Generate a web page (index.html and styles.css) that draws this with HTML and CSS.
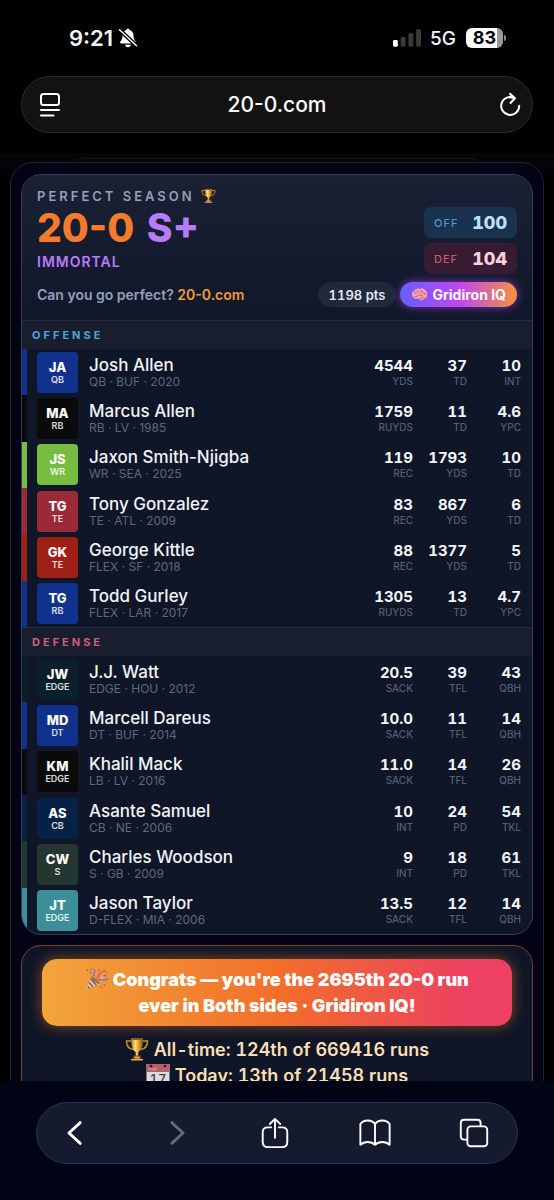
FILE: index.html
```
<!DOCTYPE html>
<html lang="en">
<head>
  <meta charset="utf-8">
  <meta name="viewport" content="width=device-width, initial-scale=1">
  <title>20-0.com</title>
  <link rel="stylesheet" href="styles.css">
</head>
<body>
<!-- Shared icons -->
<svg class="defs" aria-hidden="true">
  <defs>
    <linearGradient id="gold" x1="0" x2="1" y1="0" y2="0">
      <stop offset="0" stop-color="#a8680f"/>
      <stop offset=".35" stop-color="#ffe08a"/>
      <stop offset=".6" stop-color="#e5a82c"/>
      <stop offset="1" stop-color="#8f560c"/>
    </linearGradient>
    <symbol id="trophy" viewBox="0 0 24 24">
      <path d="M7 4H1.500c0 5 2.500 8 7 8.500M17 4h5.500c0 5-2.500 8-7 8.500" fill="none" stroke="#c98f2c" stroke-width="1.500"/>
      <path d="M6 1.500h12c0 7-1.500 12-4.700 13.500v4h-2.600v-4C7.500 13.500 6 8.500 6 1.500z" fill="url(#gold)"/>
      <ellipse cx="12" cy="2" rx="6" ry="1" fill="#8a5a15"/>
      <path d="M8.500 18.500h7l1.500 4.500H7z" fill="#8a3f1c"/>
      <path d="M9.500 19.500h5v2h-5zM6 22h12v1.500H6z" fill="#e2ad45"/>
    </symbol>
  </defs>
</svg>

<header class="status">
  <div class="status-left">
    <time>9:21</time>
    <svg class="bell" viewBox="0 0 20 20">
      <path d="M10 .8c.9 0 1.500.5 1.600 1.300 2.600.7 3.900 2.900 3.900 5.500 0 3.500 1 4.600 2.100 6 .7.900.3 1.800-.8 1.800H3.200c-1.100 0-1.500-.9-.8-1.800 1.100-1.400 2.100-2.500 2.100-6 0-2.600 1.300-4.800 3.900-5.500C8.500 1.300 9.100.8 10 .8zM7 16.800h6c-.3 1.600-1.500 2.400-3 2.400s-2.700-.8-3-2.400z" fill="#fff"/>
      <path d="M1.500 1.800l17 16" stroke="#000" stroke-width="4"/>
      <path d="M1.500 1.800l17 16" stroke="#fff" stroke-width="1.500" stroke-linecap="round"/>
    </svg>
  </div>
  <div class="status-right">
    <svg class="signal" viewBox="0 0 29 18">
      <rect x="0" y="11" width="5" height="7" rx="1.500" fill="#fff"/>
      <rect x="8" y="8" width="5" height="10" rx="1.500" fill="#3a3a3a"/>
      <rect x="16" y="4" width="5" height="14" rx="1.500" fill="#3a3a3a"/>
      <rect x="24" y="0" width="5" height="18" rx="1.500" fill="#3a3a3a"/>
    </svg>
    <span class="network">5G</span>
    <span class="battery">83</span>
  </div>
</header>

<div class="address">
  <button class="icon-btn" aria-label="Page menu">
    <svg viewBox="0 0 24 26" width="24" height="26">
      <rect x="3" y="2" width="18" height="11" rx="2.500"/>
      <path d="M3 18h18M3 23.500h12.500"/>
    </svg>
  </button>
  <input type="text" value="20-0.com" aria-label="Address">
  <button class="icon-btn" aria-label="Reload">
    <svg viewBox="0 0 24 26" width="24" height="26">
      <path d="M17 6.300 A9 9 0 1 0 21.200 13.800M12 1.800l5 4.500-4.500 4.700M16.500 6.200C15 5.500 13.500 5.300 12 5.500"/>
    </svg>
  </button>
</div>

<main class="page">
  <div class="behind"></div>
  <div class="modal">
    <section class="card">
      <div class="summary">
        <div class="summary-top">
          <div>
            <p class="kicker">PERFECT SEASON <svg class="cup-small"><use href="#trophy"/></svg></p>
            <h1>20-0 <span>S+</span></h1>
            <p class="tier">IMMORTAL</p>
          </div>
          <div class="ratings">
            <div class="rating off"><span>OFF</span><b>100</b></div>
            <div class="rating def"><span>DEF</span><b>104</b></div>
          </div>
        </div>
        <div class="summary-bottom">
          <p class="tagline">Can you go perfect? <a href="#">20-0.com</a></p>
          <span class="points">1198 pts</span>
          <span class="mode">
            <svg class="brain" viewBox="0 0 18 16">
              <path d="M2 10C0 8 1 5 3 4.500 4 2 7 1 9 2c2-1.200 5-.5 6 1.500 2 .7 3 3 2 5 .3 2-1 3.500-3 3.500-.5 1.500-2 2.500-4 2l-2-2c-2 1-5 .5-6-2z" fill="#f3a3ae"/>
              <path d="M3 7c1-1.500 2.500-1 3 0M6 4.500c1.500-.5 2.500.5 2.500 1.500M10 4c1.500 0 2 1 1.500 2.500M13 6c1.500 0 2 1 1.800 2M4 10c1.500.5 3 0 3.500-1.500M9 9c1.500-1 3 0 3.500 1M10 12c1 .3 2.500 0 3-1" fill="none" stroke="#b5566b"/>
            </svg>
            Gridiron IQ
          </span>
        </div>
      </div>

      <h2 class="offense">OFFENSE</h2>
      <table>
        <tr class="buf"><td class="player"><div><span class="badge">JA<small>QB</small></span><p>Josh Allen<small>QB · BUF · 2020</small></p></div></td><td>4544<small>YDS</small></td><td>37<small>TD</small></td><td>10<small>INT</small></td></tr>
        <tr class="lv"><td class="player"><div><span class="badge">MA<small>RB</small></span><p>Marcus Allen<small>RB · LV · 1985</small></p></div></td><td>1759<small>RUYDS</small></td><td>11<small>TD</small></td><td>4.6<small>YPC</small></td></tr>
        <tr class="sea"><td class="player"><div><span class="badge">JS<small>WR</small></span><p>Jaxon Smith-Njigba<small>WR · SEA · 2025</small></p></div></td><td>119<small>REC</small></td><td>1793<small>YDS</small></td><td>10<small>TD</small></td></tr>
        <tr class="atl"><td class="player"><div><span class="badge">TG<small>TE</small></span><p>Tony Gonzalez<small>TE · ATL · 2009</small></p></div></td><td>83<small>REC</small></td><td>867<small>YDS</small></td><td>6<small>TD</small></td></tr>
        <tr class="sf"><td class="player"><div><span class="badge">GK<small>TE</small></span><p>George Kittle<small>FLEX · SF · 2018</small></p></div></td><td>88<small>REC</small></td><td>1377<small>YDS</small></td><td>5<small>TD</small></td></tr>
        <tr class="buf"><td class="player"><div><span class="badge">TG<small>RB</small></span><p>Todd Gurley<small>FLEX · LAR · 2017</small></p></div></td><td>1305<small>RUYDS</small></td><td>13<small>TD</small></td><td>4.7<small>YPC</small></td></tr>
      </table>

      <h2 class="defense">DEFENSE</h2>
      <table>
        <tr class="hou"><td class="player"><div><span class="badge">JW<small>EDGE</small></span><p>J.J. Watt<small>EDGE · HOU · 2012</small></p></div></td><td>20.5<small>SACK</small></td><td>39<small>TFL</small></td><td>43<small>QBH</small></td></tr>
        <tr class="buf"><td class="player"><div><span class="badge">MD<small>DT</small></span><p>Marcell Dareus<small>DT · BUF · 2014</small></p></div></td><td>10.0<small>SACK</small></td><td>11<small>TFL</small></td><td>14<small>QBH</small></td></tr>
        <tr class="lv"><td class="player"><div><span class="badge">KM<small>EDGE</small></span><p>Khalil Mack<small>LB · LV · 2016</small></p></div></td><td>11.0<small>SACK</small></td><td>14<small>TFL</small></td><td>26<small>QBH</small></td></tr>
        <tr class="ne"><td class="player"><div><span class="badge">AS<small>CB</small></span><p>Asante Samuel<small>CB · NE · 2006</small></p></div></td><td>10<small>INT</small></td><td>24<small>PD</small></td><td>54<small>TKL</small></td></tr>
        <tr class="gb"><td class="player"><div><span class="badge">CW<small>S</small></span><p>Charles Woodson<small>S · GB · 2009</small></p></div></td><td>9<small>INT</small></td><td>18<small>PD</small></td><td>61<small>TKL</small></td></tr>
        <tr class="mia"><td class="player"><div><span class="badge">JT<small>EDGE</small></span><p>Jason Taylor<small>D-FLEX · MIA · 2006</small></p></div></td><td>13.5<small>SACK</small></td><td>12<small>TFL</small></td><td>14<small>QBH</small></td></tr>
      </table>
    </section>

    <section class="congrats">
      <p class="banner">
        <svg class="emoji" viewBox="0 0 24 24">
          <path d="M1.500 22.500L6 9.500c3 1 7 5 8.500 7.500z" fill="#f2cc6b"/>
          <path d="M4 15.500l4 4.500M5.500 11.500l6 7M2.800 19.500l2 2" stroke="#6c58b8" stroke-width="1.600"/>
          <path d="M6 9.500c2-.8 9.500 5.500 8.500 7.500-2.500.5-9-5-8.500-7.500z" fill="#a5713a"/>
          <path d="M9 9c-1-2.500 1.500-3.500.5-6.500M13.500 13c2.500-1.500 5 1 9-1" fill="none" stroke="#6f78dd" stroke-width="1.500" stroke-linecap="round"/>
          <path d="M12 11c2.500-1.500 1-4 3.500-5s2-2.500 4.500-2" fill="none" stroke="#e3546a" stroke-width="1.500" stroke-linecap="round"/>
          <path d="M1.500 2l2 1.200-1.800 1.300zM4.500 5.500l1.500-1 .5 2zM18.500 8.500l2.500-.8v2zM18.500 17l2 .5-1 1.800z" fill="#5d62c9"/>
          <path d="M5.500 1.500l2 .5-1.500 1.500zM12.500 3l2-1v2.500zM21 5l2 .8-2 1zM15.500 19.500l1.800.8-1.500 1.200z" fill="#e0455e"/>
          <circle cx="17" cy="11" r=".9" fill="#f7e27a"/>
        </svg>
        Congrats — you're the 2695th 20-0 run ever in Both sides · Gridiron IQ!
      </p>
      <p class="rank"><svg class="emoji"><use href="#trophy"/></svg> All-time: 124th of 669416 runs</p>
      <p class="rank">
        <svg class="emoji" viewBox="0 0 24 24">
          <rect x=".5" y="1" width="23" height="23" fill="#dcdcdf"/>
          <path d="M.5 1h23v8H.5z" fill="#b5606b"/>
          <circle cx="5" cy="3" r="1.300" fill="#30191d"/>
          <circle cx="19" cy="3" r="1.300" fill="#30191d"/>
          <path d="M3 7l1-2 1 2M7 5.500V7h1.500V5.500M10 7V4.500" stroke="#e6b9bd" stroke-width=".7" fill="none"/>
          <text x="12" y="21" text-anchor="middle">17</text>
        </svg>
        Today: 13th of 21458 runs
      </p>
    </section>
  </div>
</main>

<footer class="browser-bar">
  <nav class="toolbar">
    <button aria-label="Back"><svg viewBox="0 0 36 36"><path d="M22.500 7L10.500 18l12 11" stroke-width="3"/></svg></button>
    <button aria-label="Forward" disabled><svg viewBox="0 0 36 36"><path d="M13.500 7l12 11-12 11" stroke-width="3"/></svg></button>
    <button aria-label="Share"><svg viewBox="0 0 36 36"><path d="M14 12h-3.500Q5 12 5 17v10.500Q5 33 10.500 33h15q5.500 0 5.500-5.500V17q0-5-5.500-5H22M18 23V3M12.500 8.500L18 3l5.500 5.500"/></svg></button>
    <button aria-label="Bookmarks"><svg viewBox="0 0 36 36"><path d="M18 8.500C14.500 3.500 6 3.500 2.500 8.500v22c4-4 11.500-4 15.500 0 4-4 11.500-4 15.500 0v-22C30 3.500 21.500 3.500 18 8.500zM18 8.500v22"/></svg></button>
    <button aria-label="Tabs"><svg viewBox="0 0 36 36"><path d="M10.500 25H7.500Q4 25 4 21.500v-14Q4 4 7.500 4h14Q25 4 25 7.500v3"/><rect x="11" y="11" width="21" height="21" rx="3.500"/></svg></button>
  </nav>
</footer>
</body>
</html>
```

FILE: styles.css
```
* {
  box-sizing: border-box;
}
body {
  margin: 0;
  height: 100vh;
  display: flex;
  flex-direction: column;
  overflow: hidden;
  background: #000;
  color: #f1f5f9;
  font-family: Inter, "Liberation Sans", sans-serif;
}
h1, h2, p {
  margin: 0;
}
button {
  padding: 0;
  border: 0;
  background: none;
}
button svg {
  display: block;
  fill: none;
  stroke: #fff;
  stroke-width: 2;
  stroke-linecap: round;
  stroke-linejoin: round;
}
.defs {
  position: absolute;
  width: 0;
  height: 0;
}

/* Phone status bar */
.status {
  flex: none;
  height: 76px;
  padding: 0 48px 0 69px;
  display: flex;
  align-items: center;
  justify-content: space-between;
}
.status-left, .status-right {
  display: flex;
  align-items: center;
}
.status-left {
  gap: 5px;
  font-size: 22px;
  font-weight: 600;
}
.bell {
  width: 20px;
  height: 20px;
}
.signal {
  width: 28px;
  height: 18px;
}
.network {
  margin: 0 10px 0 9px;
  font-size: 19px;
  font-weight: 500;
}
.battery {
  position: relative;
  width: 37px;
  height: 20px;
  margin-right: 3px;
  border-radius: 6px;
  background: linear-gradient(90deg, #fff 83%, #999 83%);
  color: #000;
  font-size: 18px;
  font-weight: 700;
  line-height: 20px;
  text-align: center;
}
.battery::after {
  content: "";
  position: absolute;
  left: 38px;
  top: 7px;
  width: 2px;
  height: 6px;
  border-radius: 0 2px 2px 0;
  background: #888;
}

/* Address bar */
.address {
  flex: none;
  height: 57px;
  margin: 0 21px 20px;
  padding: 0 10px 0 16px;
  display: flex;
  align-items: center;
  border: 1px solid #2b2b2b;
  border-radius: 29px;
  background: #121212;
}
.address input {
  flex: 1;
  min-width: 0;
  padding: 0 6px 0 0;
  border: 0;
  background: none;
  color: #fff;
  font: 500 21px Inter, "Liberation Sans", sans-serif;
  text-align: center;
}

/* Page under the popup */
.page {
  position: relative;
  flex: 1;
  min-height: 0;
  overflow: hidden;
  padding: 9px 10px 0;
  background: linear-gradient(#04060a, #000 30px);
}
.behind {
  position: absolute;
  top: 5px;
  left: 72px;
  right: 72px;
  height: 40px;
  border: 1px solid #15180a;
  border-radius: 12px;
}
.modal {
  position: relative;
  padding: 11px 10px;
  border: 1px solid #1f2333;
  border-radius: 22px;
  background: #020416;
}
.card {
  overflow: hidden;
  border: 1px solid #353d50;
  border-radius: 20px;
  background: #0f1627;
}

/* Card header */
.summary {
  padding: 12px 15px 13px;
  background: linear-gradient(#1a2135, #11172a);
}
.summary-top {
  display: flex;
  justify-content: space-between;
}
.kicker {
  display: flex;
  align-items: center;
  gap: 6px;
  height: 17px;
  color: #94a0b4;
  font-size: 13px;
  font-weight: 600;
  letter-spacing: 3px;
}
.cup-small {
  width: 15px;
  height: 15px;
}
h1 {
  color: #f47a2c;
  font-size: 39px;
  font-weight: 800;
  line-height: 48px;
}
h1 span {
  margin-left: 4px;
  color: #b77cfa;
}
.tier {
  color: #b77cfa;
  font-size: 14px;
  font-weight: 600;
  letter-spacing: 1px;
  line-height: 20px;
}
.ratings {
  display: flex;
  flex-direction: column;
  gap: 5px;
  padding-top: 20px;
}
.rating {
  display: flex;
  align-items: center;
  justify-content: space-between;
  width: 93px;
  height: 31px;
  padding: 0 10px;
  border-radius: 7px;
  font-size: 18px;
  font-variant-numeric: tabular-nums;
}
.rating span {
  font-size: 11px;
  font-weight: 500;
  letter-spacing: 1px;
}
.rating b {
  font-weight: 800;
}
.off {
  background: #19324d;
  color: #bfe0fb;
}
.off span {
  color: #4c9ad0;
}
.def {
  background: #351c33;
  color: #fbcfdb;
}
.def span {
  color: #cc5578;
}
.summary-bottom {
  display: flex;
  align-items: center;
  gap: 4px;
  padding-top: 8px;
}
.tagline {
  flex: 1;
  color: #94a0b4;
  font-size: 14px;
  font-weight: 600;
}
.tagline a {
  color: #f49a38;
  text-decoration: none;
}
.points, .mode {
  display: flex;
  align-items: center;
  height: 25px;
  border-radius: 13px;
}
.points {
  padding: 0 11px;
  background: #1f293b;
  color: #e2e8f0;
  font-size: 13px;
  font-variant-numeric: tabular-nums;
  font-weight: 600;
}
.mode {
  gap: 4px;
  padding: 0 11px;
  background: linear-gradient(90deg, #6660fa, #bf45f2 50%, #f5923c);
  box-shadow: 0 0 9px #8136b8;
  color: #fff;
  font-size: 14px;
  font-weight: 700;
}
.brain {
  width: 17px;
  height: 15px;
}

/* Player lists */
h2 {
  height: 29px;
  padding-left: 10px;
  border-top: 1px solid #272d3d;
  background: #181e2e;
  font-size: 11px;
  font-weight: 700;
  letter-spacing: 3px;
  line-height: 28px;
}
.offense {
  color: #4fa3dc;
}
.defense {
  color: #cd5c7d;
}
table {
  width: 100%;
  height: 278px;
  border-spacing: 0;
  table-layout: fixed;
}
tr {
  height: 46px;
}
td {
  width: 54px;
  padding: 0;
  font-size: 15px;
  font-variant-numeric: tabular-nums;
  font-weight: 700;
  line-height: 17px;
  text-align: right;
}
td:last-child {
  width: 65px;
  padding-right: 11px;
}
td > small {
  display: block;
  color: #555e73;
  font-size: 10px;
  font-weight: 500;
  line-height: 14px;
}
.player {
  width: auto;
  padding-left: 10px;
  border-left: 5px solid var(--team);
  font-variant-numeric: normal;
  text-align: left;
}
.player div {
  display: flex;
  align-items: center;
  gap: 11px;
}
.player p {
  font-size: 17px;
  font-weight: 500;
  line-height: 18px;
  white-space: nowrap;
}
.player p small {
  display: block;
  color: #5f687d;
  font-size: 12px;
  font-weight: 400;
  line-height: 15px;
}
.badge {
  width: 41px;
  height: 41px;
  padding-top: 8px;
  border-radius: 4px;
  background: var(--team);
  color: #fff;
  font-size: 13px;
  font-weight: 800;
  line-height: 15px;
  text-align: center;
}
.badge small {
  display: block;
  font-size: 9px;
  font-weight: 600;
  line-height: 10px;
  opacity: .85;
}
.buf { --team: #11328c; }
.lv { --team: #0a0a0b; }
.sea { --team: #77bd42; }
.atl { --team: #9b2a38; }
.sf { --team: #9f1f14; }
.hou { --team: #0b1f2b; }
.ne { --team: #072146; }
.gb { --team: #243630; }
.mia { --team: #3c8f99; }

/* Ranking */
.congrats {
  margin-top: 10px;
  padding: 13px 20px;
  border: 1px solid #74442f;
  border-radius: 20px;
  background: #0f1627;
  font-size: 18px;
  line-height: 26px;
  text-align: center;
}
.banner {
  margin-bottom: 11px;
  padding: 8px 30px 7px;
  border-radius: 15px;
  background: linear-gradient(90deg, #f2a53b, #f26f2a 50%, #ec4160 90%);
  box-shadow: 0 0 14px #8a4a26;
  color: #fff;
  font-weight: 900;
}
.rank {
  color: #fbdfb4;
  font-variant-numeric: tabular-nums;
  font-weight: 600;
}
.emoji {
  width: 24px;
  height: 24px;
  vertical-align: -5px;
}
.emoji text {
  fill: #444;
  font-size: 13px;
  font-weight: 500;
}

/* Browser toolbar */
.browser-bar {
  flex: none;
  padding: 21px 36px 36px;
  background: #010414;
}
.toolbar {
  display: flex;
  align-items: center;
  justify-content: space-between;
  height: 62px;
  padding: 0 26px 0 22px;
  border: 1px solid #2b2e54;
  border-radius: 31px;
  background: #161a2e;
}
.toolbar svg {
  width: 34px;
  height: 34px;
}
.toolbar button:disabled {
  opacity: .35;
}
```
